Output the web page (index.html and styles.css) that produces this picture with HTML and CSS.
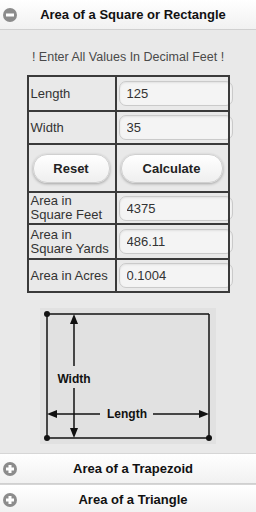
FILE: index.html
```html
<!DOCTYPE html>
<html lang="en">
<head>
  <meta charset="UTF-8">
  <meta name="viewport" content="width=device-width, initial-scale=1">
  <title>Area Calculator</title>
  <link rel="stylesheet" href="styles.css">
</head>
<body>

<div class="section open">
  <h3 class="section-head">
    <svg class="icon" width="14" height="14" viewBox="0 0 14 14"><circle cx="7" cy="7" r="7" fill="#8c8c8c"/><rect x="3" y="5.5" width="8" height="3" fill="#fff"/></svg>
    Area of a Square or Rectangle
  </h3>
  <div class="section-body">
    <p class="note">! Enter All Values In Decimal Feet !</p>

    <table class="calc">
      <tr class="row-a">
        <td class="label">Length</td>
        <td><input type="text" value="125"></td>
      </tr>
      <tr class="row-b">
        <td class="label">Width</td>
        <td><input type="text" value="35"></td>
      </tr>
      <tr class="row-btn">
        <td><button>Reset</button></td>
        <td><button>Calculate</button></td>
      </tr>
      <tr class="row-c">
        <td class="label">Area in<br>Square Feet</td>
        <td><input type="text" value="4375"></td>
      </tr>
      <tr class="row-d">
        <td class="label">Area in<br>Square Yards</td>
        <td><input type="text" value="486.11"></td>
      </tr>
      <tr class="row-e">
        <td class="label">Area in Acres</td>
        <td><input type="text" value="0.1004"></td>
      </tr>
    </table>

    <!-- diagram -->
    <svg class="diagram" width="176" height="136" viewBox="0 0 176 136">
      <rect x="0" y="0" width="176" height="136" fill="#e1e1e1"/>
      <g stroke="#111" stroke-width="1.5" fill="none">
        <line x1="7" y1="6" x2="169" y2="6"/>
        <line x1="7" y1="6" x2="7" y2="130"/>
        <line x1="169" y1="6" x2="169" y2="130"/>
        <line x1="7" y1="130" x2="169" y2="130"/>
        <line x1="34" y1="14" x2="34" y2="58"/>
        <line x1="34" y1="80" x2="34" y2="122"/>
        <line x1="15" y1="106" x2="60" y2="106"/>
        <line x1="113" y1="106" x2="161" y2="106"/>
      </g>
      <g fill="#111">
        <circle cx="7" cy="6" r="3"/>
        <circle cx="7" cy="130" r="3"/>
        <circle cx="169" cy="130" r="3"/>
        <polygon points="34,6 30,16 38,16"/>
        <polygon points="34,130 30,120 38,120"/>
        <polygon points="7,106 17,102 17,110"/>
        <polygon points="169,106 159,102 159,110"/>
        <text x="34" y="75" text-anchor="middle" class="dia-text">Width</text>
        <text x="87" y="110" text-anchor="middle" class="dia-text">Length</text>
      </g>
    </svg>
  </div>
</div>

<div class="section">
  <h3 class="section-head">
    <svg class="icon" width="14" height="14" viewBox="0 0 14 14"><circle cx="7" cy="7" r="7" fill="#8c8c8c"/><rect x="3" y="5.5" width="8" height="3" fill="#fff"/><rect x="5.5" y="3" width="3" height="8" fill="#fff"/></svg>
    Area of a Trapezoid
  </h3>
</div>

<div class="section">
  <h3 class="section-head">
    <svg class="icon" width="14" height="14" viewBox="0 0 14 14"><circle cx="7" cy="7" r="7" fill="#8c8c8c"/><rect x="3" y="5.5" width="8" height="3" fill="#fff"/><rect x="5.5" y="3" width="3" height="8" fill="#fff"/></svg>
    Area of a Triangle
  </h3>
</div>

</body>
</html>
```

FILE: styles.css
```css
body {
  margin: 0;
  font-family: "Liberation Sans", Arial, sans-serif;
  background: #e9e9e9;
  color: #222;
}
.section-head {
  position: relative;
  margin: 0;
  height: 29px;
  line-height: 29px;
  padding-left: 10px;
  text-align: center;
  font-size: 13px;
  font-weight: bold;
  color: #111;
  background: linear-gradient(#ffffff, #f1f1f1);
  border-top: 1px solid #d6d6d6;
  border-bottom: 1px solid #d0d0d0;
}
.section.open .section-head {
  border-top: none;
}
.icon {
  position: absolute;
  left: 3px;
  top: 8px;
}
.section-body {
  padding: 19px 0 9px;
  text-align: center;
}
.note {
  margin: 0 0 10px;
  font-size: 12.5px;
  color: #4a4a4a;
  line-height: 16px;
}
.calc {
  margin: 0 auto;
  width: 203px;
  table-layout: fixed;
  border-collapse: collapse;
  border: 2px solid #3a3a3a;
  text-align: left;
}
.calc td {
  border: 2px solid #3a3a3a;
  padding: 0 2px;
  vertical-align: middle;
  font-size: 13px;
  color: #333;
  line-height: 14px;
}
.calc td:first-child {
  width: 82px;
}
.row-a { height: 35px; }
.row-b { height: 33px; }
.row-btn { height: 48px; }
.row-c { height: 32px; }
.row-d { height: 35px; }
.row-e { height: 33px; }
.calc input {
  display: block;
  box-sizing: border-box;
  width: 114px;
  height: 25px;
  padding: 0 7px;
  font-family: "Liberation Sans", Arial, sans-serif;
  font-size: 13px;
  color: #333;
  background: #f4f4f4;
  border: 1px solid #cacaca;
  border-radius: 7px;
  box-shadow: inset 0 1px 2px rgba(0,0,0,0.08);
}
.row-btn td {
  padding: 0 5px 0 4px;
}
.calc button {
  display: block;
  width: 100%;
  height: 29px;
  font-family: "Liberation Sans", Arial, sans-serif;
  font-size: 13px;
  font-weight: bold;
  color: #222;
  background: linear-gradient(#ffffff, #efefef);
  border: 1px solid #d0d0d0;
  border-radius: 14px;
  box-shadow: 0 1px 3px rgba(0,0,0,0.3);
}
.diagram {
  display: block;
  margin: 15px auto 0;
}
.dia-text {
  font-family: "Liberation Sans", Arial, sans-serif;
  font-size: 12px;
  font-weight: bold;
}
```
